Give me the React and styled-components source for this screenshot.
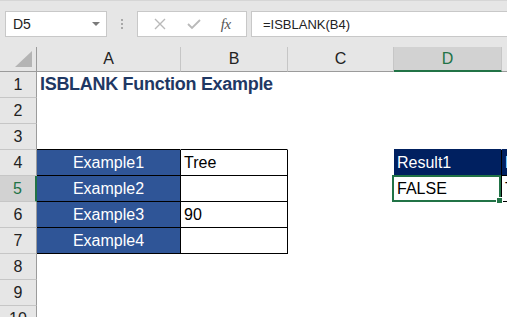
import React from 'react'
import styled, { createGlobalStyle } from 'styled-components'

const GlobalStyle = createGlobalStyle`
	html, body { margin: 0; padding: 0; background: #fff; }
	body { font-family: 'Liberation Sans', Arial, sans-serif; }
`

const GREEN = '#217346'
const BLUE = '#2F5597'
const NAVY = '#002060'
const BLACK = '#000'

const Window = styled.div`
	width: 507px;
	height: 317px;
	overflow: hidden;
	background: #fff;
	display: flex;
	flex-direction: column;
`

const Toolbar = styled.div`
	height: 47px;
	flex: none;
	box-sizing: border-box;
	background: #e6e6e6;
	border-top: 1px solid #d6d6d6;
	display: flex;
	align-items: flex-start;
	padding: 10px 0 0 5px;
`

const Box = styled.div`
	height: 26px;
	box-sizing: border-box;
	background: #fff;
	border: 1px solid #c8c8c8;
	display: flex;
	align-items: center;
	flex: none;
`

const NameBox = styled(Box)`
	width: 102px;
	padding: 0 6px 0 7px;
	justify-content: space-between;
	font-size: 14px;
	color: #222;
`

const Caret = styled.span`
	width: 0;
	height: 0;
	border-left: 4px solid transparent;
	border-right: 4px solid transparent;
	border-top: 4px solid #7a7a7a;
`

const Dots = styled.div`
	width: 30px;
	height: 26px;
	flex: none;
	display: flex;
	flex-direction: column;
	align-items: center;
	justify-content: center;
	gap: 2px;

	span {
		width: 2px;
		height: 2px;
		background: #a8a8a8;
	}
`

const ButtonBox = styled(Box)`
	width: 110px;
	justify-content: space-around;
	padding: 0 6px;
`

const FxLabel = styled.span`
	font-family: 'Liberation Serif', serif;
	font-style: italic;
	font-size: 15px;
	color: #555;
	letter-spacing: -0.5px;
`

const Formula = styled(Box)`
	flex: 1;
	margin-left: 4px;
	border-right: none;
	padding-left: 11px;
	font-size: 13px;
	color: #222;
`

const Sheet = styled.div`
	display: grid;
	grid-template-columns: 37px 144px 107px 106px 108px 64px;
	grid-template-rows: 25px repeat(10, 26px);
	flex: none;
`

const Corner = styled.div`
	box-sizing: border-box;
	background: #e6e6e6;
	border-right: 1px solid #9b9b9b;
	border-bottom: 1px solid #9b9b9b;
	position: relative;

	&::after {
		content: '';
		position: absolute;
		right: 4px;
		bottom: 4px;
		border-left: 17px solid transparent;
		border-bottom: 16px solid #b4b4b4;
	}
`

const ColHead = styled.div`
	box-sizing: border-box;
	background: ${p => (p.$active ? '#d2d2d2' : '#e6e6e6')};
	color: ${p => (p.$active ? GREEN : '#222')};
	border-right: 1px solid #c6c6c6;
	border-bottom: ${p => (p.$active ? `2px solid ${GREEN}` : '1px solid #9b9b9b')};
	display: flex;
	align-items: center;
	justify-content: center;
	font-size: 16px;
	padding-top: ${p => (p.$active ? '1px' : '0')};
`

const RowHead = styled.div`
	box-sizing: border-box;
	background: ${p => (p.$active ? '#d2d2d2' : '#e6e6e6')};
	color: ${p => (p.$active ? GREEN : '#222')};
	border-right: ${p => (p.$active ? `2px solid ${GREEN}` : '1px solid #9b9b9b')};
	border-bottom: 1px solid #c6c6c6;
	display: flex;
	align-items: center;
	justify-content: center;
	font-size: 16px;
`

const Cell = styled.div`
	position: relative;
	box-sizing: border-box;
	min-width: 0;
	grid-column: ${p => (p.$span ? `span ${p.$span}` : 'auto')};
	background: ${p => p.$fill || '#fff'};
	color: ${p => p.$color || '#000'};
	border-right: 1px solid ${p => p.$right || 'transparent'};
	border-bottom: 1px solid ${p => p.$bottom || 'transparent'};
	display: flex;
	align-items: center;
	justify-content: ${p => (p.$center ? 'center' : 'flex-start')};
	padding: 0 3px;
	font-size: 16px;
	white-space: nowrap;
	overflow: ${p => (p.$selected ? 'visible' : 'hidden')};
	z-index: ${p => (p.$selected ? 2 : 'auto')};
`

const Title = styled.span`
	font-weight: bold;
	font-size: 18px;
	letter-spacing: -0.3px;
	color: #1f3864;
`

const Selection = styled.div`
	position: absolute;
	left: -2px;
	top: -1px;
	right: 0;
	bottom: -1px;
	border: 2px solid ${GREEN};
	pointer-events: none;

	&::after {
		content: '';
		position: absolute;
		right: -4px;
		bottom: -4px;
		width: 5px;
		height: 5px;
		background: ${GREEN};
		border: 1px solid #fff;
	}
`

const COLS = ['A', 'B', 'C', 'D', 'E']

const label = (text) => ({ text, fill: BLUE, color: '#fff', center: true, right: BLACK, bottom: BLACK })
const value = (text) => ({ text, right: BLACK, bottom: BLACK })
const header = (text) => ({ text, fill: NAVY, color: '#fff', right: BLACK, bottom: BLACK })

const cells = {
	3: { A: { bottom: BLACK }, B: { bottom: BLACK }, D: { bottom: NAVY }, E: { bottom: NAVY } },
	4: { A: label('Example1'), B: value('Tree'), D: header('Result1'), E: header('Result2') },
	5: { A: label('Example2'), B: value(''), D: { ...value('FALSE'), selected: true }, E: value('TRUE') },
	6: { A: label('Example3'), B: value('90') },
	7: { A: label('Example4'), B: value('') },
}

const renderRow = (n) => {
	if (n === 1) {
		return [
			<Cell key="1A" $span={3}><Title>ISBLANK Function Example</Title></Cell>,
			<Cell key="1D" />,
			<Cell key="1E" />,
		]
	}
	const row = cells[n] || {}
	return COLS.map(col => {
		const c = row[col] || {}
		return (
			<Cell
				key={n + col}
				$fill={c.fill}
				$color={c.color}
				$center={c.center}
				$right={c.right}
				$bottom={c.bottom}
				$selected={c.selected}
			>
				{c.text}
				{c.selected && <Selection />}
			</Cell>
		)
	})
}

const CrossIcon = () => (
	<svg width="14" height="14" viewBox="0 0 14 14">
		<path d="M2 2 L12 12 M12 2 L2 12" stroke="#b9b9b9" strokeWidth="1.4" fill="none" />
	</svg>
)

const CheckIcon = () => (
	<svg width="16" height="14" viewBox="0 0 16 14">
		<path d="M2 7 L6 11 L14 3" stroke="#b9b9b9" strokeWidth="1.8" fill="none" />
	</svg>
)

export default function App() {
	const rows = [1, 2, 3, 4, 5, 6, 7, 8, 9, 10]
	return (
		<Window>
			<GlobalStyle />
			<Toolbar>
				<NameBox>
					<span>D5</span>
					<Caret />
				</NameBox>
				<Dots><span /><span /><span /></Dots>
				<ButtonBox>
					<CrossIcon />
					<CheckIcon />
					<FxLabel>fx</FxLabel>
				</ButtonBox>
				<Formula>=ISBLANK(B4)</Formula>
			</Toolbar>
			<Sheet>
				<Corner />
				{COLS.map(c => (
					<ColHead key={c} $active={c === 'D'}>{c}</ColHead>
				))}
				{rows.map(n => (
					<React.Fragment key={n}>
						<RowHead $active={n === 5}>{n}</RowHead>
						{renderRow(n)}
					</React.Fragment>
				))}
			</Sheet>
		</Window>
	)
}
